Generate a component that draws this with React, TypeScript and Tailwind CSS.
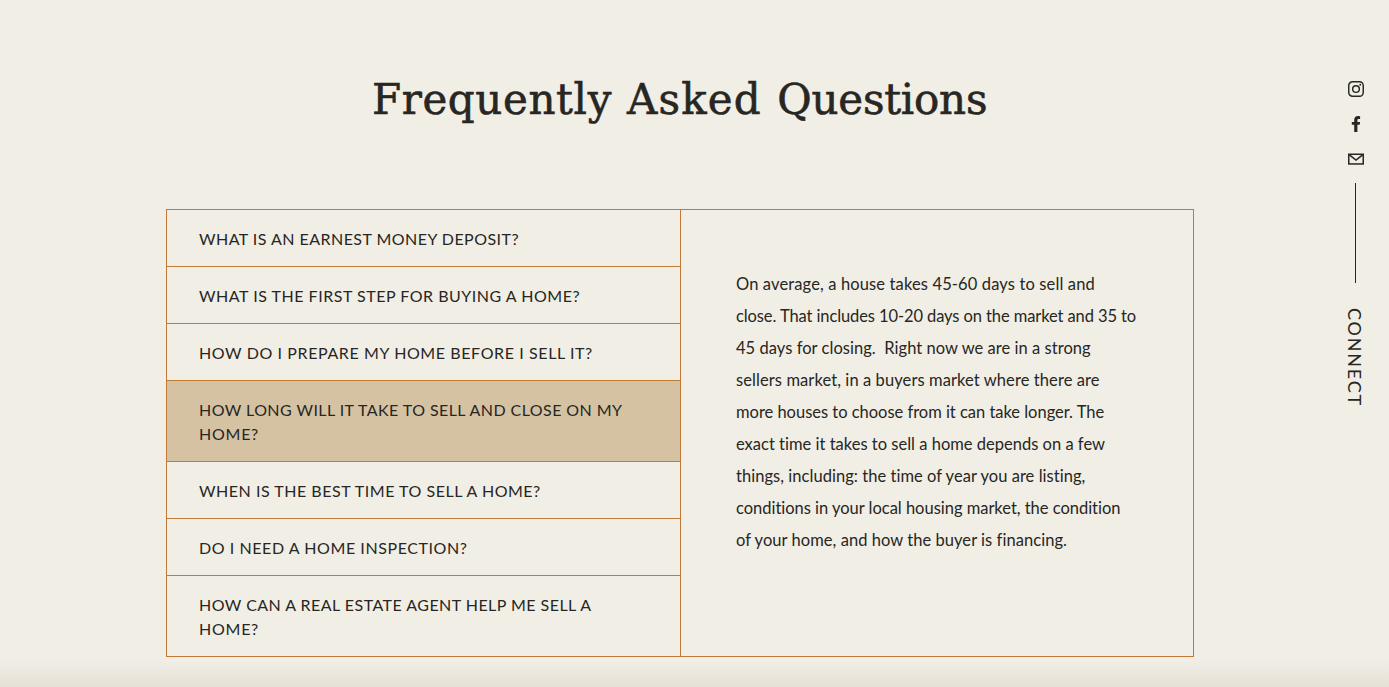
import React from 'react';
import { clsx } from 'clsx';

interface Question {
  lines: { text: string; tracking: string }[];
  active?: boolean;
}

const questions: Question[] = [
  { lines: [{ text: 'What is an earnest money deposit?', tracking: 'tracking-[0.46px]' }] },
  { lines: [{ text: 'What is the first step for buying a home?', tracking: 'tracking-[0.52px]' }] },
  { lines: [{ text: 'How do I prepare my home before I sell it?', tracking: 'tracking-[0.6px]' }] },
  {
    lines: [
      { text: 'How long will it take to sell and close on my', tracking: 'tracking-[0.43px]' },
      { text: 'home?', tracking: 'tracking-[0.75px]' },
    ],
    active: true,
  },
  { lines: [{ text: 'When is the best time to sell a home?', tracking: 'tracking-[0.52px]' }] },
  { lines: [{ text: 'Do I need a home inspection?', tracking: 'tracking-[0.57px]' }] },
  {
    lines: [
      { text: 'How can a real estate agent help me sell a', tracking: 'tracking-[0.46px]' },
      { text: 'home?', tracking: 'tracking-[0.75px]' },
    ],
  },
];

const answer = [
  { text: 'On average, a house takes 45-60 days to sell and', tracking: 'tracking-[0.13px]' },
  { text: 'close. That includes 10-20 days on the market and 35 to', tracking: 'tracking-[-0.1px]' },
  { text: '45 days for closing.\u00a0 Right now we are in a strong', tracking: 'tracking-[0.04px]' },
  { text: 'sellers market, in a buyers market where there are', tracking: 'tracking-[0.09px]' },
  { text: 'more houses to choose from it can take longer. The', tracking: 'tracking-[-0.02px]' },
  { text: 'exact time it takes to sell a home depends on a few', tracking: 'tracking-[0.01px]' },
  { text: 'things, including: the time of year you are listing,', tracking: 'tracking-[0.04px]' },
  { text: 'conditions in your local housing market, the condition', tracking: 'tracking-[-0.02px]' },
  { text: 'of your home, and how the buyer is financing.', tracking: 'tracking-[0.05px]' },
];

const SocialRail: React.FC = () => (
  <aside className="absolute right-[25px] top-[81px] flex w-4 flex-col items-center">
    <a href="#instagram" aria-label="Instagram">
      <svg width="16" height="16" viewBox="0 0 16 16" fill="none" stroke="currentColor" strokeWidth="1.45">
        <rect x="0.75" y="0.75" width="14.5" height="14.5" rx="3.8" />
        <circle cx="8" cy="8" r="3.35" />
        <circle cx="12.25" cy="3.75" r="0.95" fill="currentColor" stroke="none" />
      </svg>
    </a>
    <a href="#facebook" aria-label="Facebook" className="mt-[19px]">
      <svg width="16" height="16" viewBox="0 0 16 16" fill="currentColor">
        <path d="M9.4 16V8.8h2.3l.4-2.9H9.4V4.1c0-.75.3-1.2 1.3-1.2h1.4V.15A20 20 0 0 0 9.9 0C7.75 0 6.2 1.32 6.2 3.75V5.9H3.8v2.9h2.4V16z" />
      </svg>
    </a>
    <a href="#email" aria-label="Email" className="mt-[19px]">
      <svg width="16" height="16" viewBox="0 0 16 16" fill="none" stroke="currentColor" strokeWidth="1.5">
        <rect x="0.75" y="3.25" width="14.5" height="9.7" />
        <path d="M1.4 3.8 8 9l6.6-5.2" />
      </svg>
    </a>
    <div className="mr-px mt-4 h-[100px] w-px bg-[#272622]" />
    <span className="mr-0.5 mt-[25px] text-[18px] leading-5 tracking-[1.8px] [writing-mode:vertical-rl]">CONNECT</span>
  </aside>
);

export default function App() {
  return (
    <main className="relative flex h-[687px] w-full flex-col overflow-hidden bg-[#f1eee6] font-['Lato','Liberation_Sans',sans-serif] text-[#272622]">
      <h1 className="ml-[372px] mt-[68px] whitespace-nowrap font-['DejaVu_Serif',serif] text-[42px] leading-[64px] [-webkit-text-stroke:0.6px_#272622] [word-spacing:1.2px]">
        <span className="tracking-[0.6px]">Frequently </span>
        <span className="tracking-[1.1px]">Asked </span>
        <span className="tracking-[-0.25px]">Questions</span>
      </h1>

      <section className="ml-[166px] mt-[77px] flex h-[448px] w-[1028px] shrink-0 border border-[#c17a35]">
        <ul className="w-[514px] shrink-0 divide-y divide-[#c17a35] border-r border-[#c17a35]">
          {questions.map((q) => (
            <li key={q.lines[0].text} className={clsx('px-8 pb-[15px] pt-[17px] uppercase', q.active && 'bg-[#d4c2a3]')}>
              {q.lines.map((l) => (
                <span key={l.text} className={clsx('block whitespace-nowrap text-[16px] leading-6', l.tracking)}>
                  {l.text}
                </span>
              ))}
            </li>
          ))}
        </ul>
        <div className="pl-[55px] pt-[58px] text-[16.5px] leading-8 [font-variant-ligatures:none]">
          {answer.map((l) => (
            <span key={l.text} className={clsx('block whitespace-nowrap', l.tracking)}>
              {l.text}
            </span>
          ))}
        </div>
      </section>

      <div className="mt-[3px] h-[27px] w-full shrink-0 bg-linear-to-b from-[#f1eee6] to-[#e4e0d6]" />
      <SocialRail />
    </main>
  );
}
